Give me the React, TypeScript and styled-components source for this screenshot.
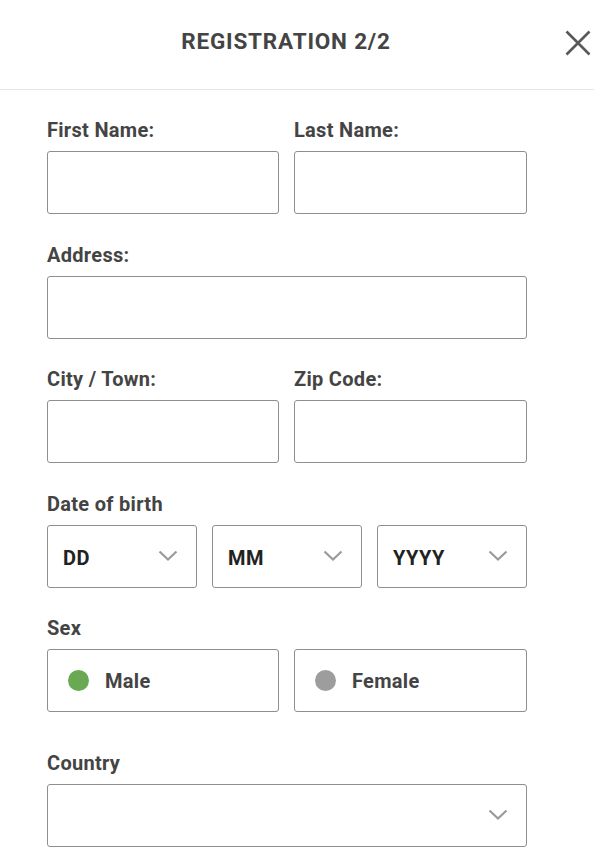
import React from "react";
import styled, { createGlobalStyle } from "styled-components";

const Global = createGlobalStyle`
  html, body { margin: 0; padding: 0; background: #fff; }
  body { font-family: Roboto, "Noto Sans", Arial, sans-serif; -webkit-font-smoothing: antialiased; }
  * { box-sizing: border-box; }
`;

const Page = styled.div`
  width: 594px;
  min-height: 849px;
  background: #fff;
`;

const Header = styled.header`
  position: relative;
  height: 90px;
  border-bottom: 1px solid #e6e6e6;
  display: flex;
  align-items: center;
  justify-content: center;
`;

const Title = styled.h1`
  margin: 0;
  font-size: 22.5px;
  font-weight: 700;
  color: #444;
  letter-spacing: 0.8px;
  transform: translate(-11px, -4px);
`;

const Close = styled.button`
  position: absolute;
  right: 2px;
  top: 29px;
  width: 28px;
  height: 28px;
  padding: 0;
  border: 0;
  background: none;
  display: flex;
  align-items: center;
  justify-content: center;
`;

const Form = styled.form`
  width: 480px;
  margin-left: 47px;
  padding-top: 29px;
  display: flex;
  flex-direction: column;
  gap: 29.5px;
`;

const Row = styled.div<{ $cols: string }>`
  display: grid;
  grid-template-columns: ${(p) => p.$cols};
  column-gap: 15px;
`;

const Field = styled.div<{ $extra?: number }>`
  display: flex;
  flex-direction: column;
  margin-top: ${(p) => p.$extra ?? 0}px;
`;

const Label = styled.label`
  font-size: 20px;
  line-height: 22px;
  font-weight: 700;
  letter-spacing: 0.3px;
  color: #444;
  margin-bottom: 10px;
`;

const Box = styled.div`
  height: 63px;
  border: 1px solid #8e8e8e;
  border-radius: 3px;
  background: #fff;
`;

const Input = styled.input`
  height: 63px;
  width: 100%;
  border: 1px solid #8e8e8e;
  border-radius: 3px;
  background: #fff;
  outline: none;
  padding: 0 15px;
  font: inherit;
  font-size: 19px;
`;

const SelectBox = styled(Box)`
  display: flex;
  align-items: center;
  justify-content: space-between;
  padding: 0 18px 0 15px;
`;

const SelectText = styled.span`
  font-size: 20px;
  font-weight: 700;
  color: #222;
  letter-spacing: 0.4px;
  margin-top: 3px;
`;

const RadioBox = styled(Box)`
  display: flex;
  align-items: center;
  padding-left: 20px;
  gap: 16px;
`;

const Dot = styled.span<{ $on: boolean }>`
  width: 21px;
  height: 21px;
  border-radius: 50%;
  background: ${(p) => (p.$on ? "#69a953" : "#9d9d9d")};
`;

const RadioText = styled.span`
  font-size: 20px;
  font-weight: 700;
  color: #444;
  letter-spacing: 0.3px;
  margin-top: 1px;
`;

const Chevron = () => (
  <svg width="20" height="12" viewBox="0 0 20 12" fill="none">
    <path d="M1.5 1.5 L10 9.5 L18.5 1.5" stroke="#9a9a9a" strokeWidth="2.2" />
  </svg>
);

const Select = ({ text }: { text?: string }) => (
  <SelectBox>
    <SelectText>{text}</SelectText>
    <Chevron />
  </SelectBox>
);

const TWO = "232px 1fr";
const ONE = "1fr";
const THREE = "repeat(3, 1fr)";

export default function App() {
  return (
    <Page>
      <Global />
      <Header>
        <Title>REGISTRATION 2/2</Title>
        <Close aria-label="close">
          <svg width="26" height="26" viewBox="0 0 26 26">
            <path d="M1.5 1.5 L24.5 24.5 M24.5 1.5 L1.5 24.5" stroke="#595959" strokeWidth="2.6" />
          </svg>
        </Close>
      </Header>
      <Form>
        <Row $cols={TWO}>
          <Field>
            <Label>First Name:</Label>
            <Input />
          </Field>
          <Field>
            <Label>Last Name:</Label>
            <Input />
          </Field>
        </Row>
        <Row $cols={ONE}>
          <Field>
            <Label>Address:</Label>
            <Input />
          </Field>
        </Row>
        <Row $cols={TWO}>
          <Field>
            <Label>City / Town:</Label>
            <Input />
          </Field>
          <Field>
            <Label>Zip Code:</Label>
            <Input />
          </Field>
        </Row>
        <Field>
          <Label>Date of birth</Label>
          <Row $cols={THREE}>
            <Select text="DD" />
            <Select text="MM" />
            <Select text="YYYY" />
          </Row>
        </Field>
        <Field>
          <Label>Sex</Label>
          <Row $cols={TWO}>
            <RadioBox>
              <Dot $on />
              <RadioText>Male</RadioText>
            </RadioBox>
            <RadioBox>
              <Dot $on={false} />
              <RadioText>Female</RadioText>
            </RadioBox>
          </Row>
        </Field>
        <Field $extra={10}>
          <Label>Country</Label>
          <Select />
        </Field>
      </Form>
    </Page>
  );
}
